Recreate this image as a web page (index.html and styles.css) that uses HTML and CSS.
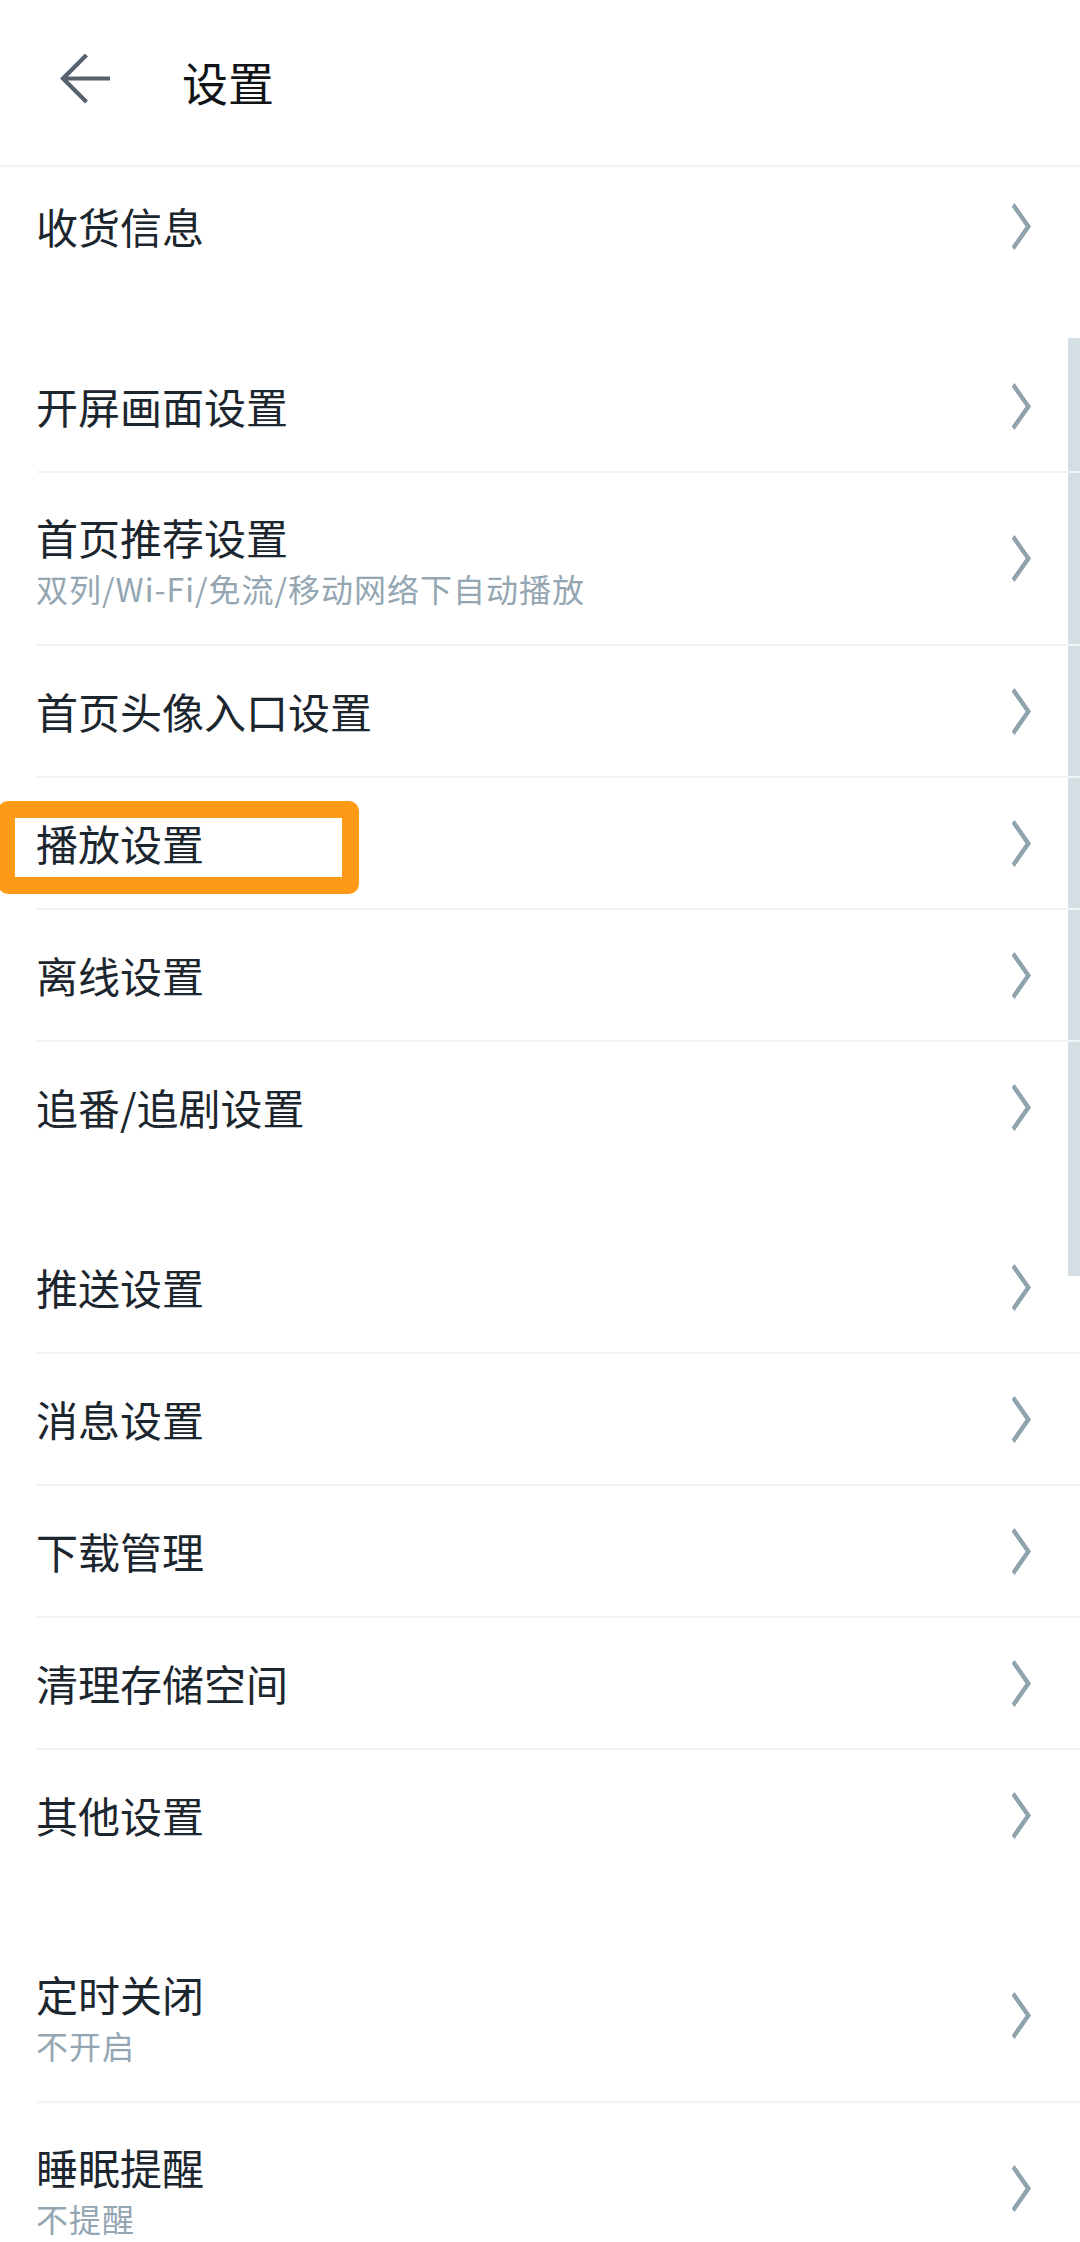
FILE: index.html
```html
<!DOCTYPE html>
<html lang="zh-CN">
<head>
<meta charset="utf-8">
<title>设置</title>
<link rel="stylesheet" href="styles.css">
</head>
<body>
<div class="page">
  <header class="topbar">
    <svg class="back" width="52" height="52" viewBox="0 0 52 52">
      <path d="M50 24.5H6 M27 2.5L5 24.5L27 46.5" fill="none" stroke="#56636e" stroke-width="4.2" stroke-linecap="square" stroke-linejoin="miter"/>
    </svg>
    <h1 class="title">设置</h1>
  </header>

  <section class="group group-first">
    <div class="item item-first"><div class="inner"><div class="text"><div class="label">收货信息</div></div><span class="chev"></span></div></div>
  </section>

  <div class="gap"></div>

  <section class="group">
    <div class="item"><div class="inner"><div class="text"><div class="label">开屏画面设置</div></div><span class="chev"></span></div></div>
    <div class="item two"><div class="inner"><div class="text"><div class="label">首页推荐设置</div><div class="sub">双列/Wi-Fi/免流/移动网络下自动播放</div></div><span class="chev"></span></div></div>
    <div class="item"><div class="inner"><div class="text"><div class="label">首页头像入口设置</div></div><span class="chev"></span></div></div>
    <div class="item"><div class="inner"><div class="text"><div class="label">播放设置</div></div><span class="chev"></span></div></div>
    <div class="item"><div class="inner"><div class="text"><div class="label">离线设置</div></div><span class="chev"></span></div></div>
    <div class="item last"><div class="inner"><div class="text"><div class="label">追番/追剧设置</div></div><span class="chev"></span></div></div>
  </section>

  <div class="gap"></div>

  <section class="group">
    <div class="item"><div class="inner"><div class="text"><div class="label">推送设置</div></div><span class="chev"></span></div></div>
    <div class="item"><div class="inner"><div class="text"><div class="label">消息设置</div></div><span class="chev"></span></div></div>
    <div class="item"><div class="inner"><div class="text"><div class="label">下载管理</div></div><span class="chev"></span></div></div>
    <div class="item"><div class="inner"><div class="text"><div class="label">清理存储空间</div></div><span class="chev"></span></div></div>
    <div class="item last"><div class="inner"><div class="text"><div class="label">其他设置</div></div><span class="chev"></span></div></div>
  </section>

  <div class="gap"></div>

  <section class="group">
    <div class="item two"><div class="inner"><div class="text"><div class="label">定时关闭</div><div class="sub">不开启</div></div><span class="chev"></span></div></div>
    <div class="item two last"><div class="inner"><div class="text"><div class="label">睡眠提醒</div><div class="sub">不提醒</div></div><span class="chev"></span></div></div>
  </section>

  <div class="scrollbar"></div>
  <div class="highlight"></div>
</div>
</body>
</html>
```

FILE: styles.css
```css
html, body {
  margin: 0;
  padding: 0;
  background: #ffffff;
}
body {
  width: 1080px;
  height: 2242px;
  overflow: hidden;
  font-family: "Noto Sans CJK SC", "Noto Sans", sans-serif;
}
.page {
  position: relative;
  width: 1080px;
  height: 2242px;
  overflow: hidden;
  background: #ffffff;
}
.topbar {
  height: 165px;
  display: flex;
  align-items: center;
  border-bottom: 2px solid #f1f5f8;
  box-sizing: content-box;
}
.back {
  margin-left: 58px;
  margin-top: -6px;
  flex: none;
}
.title {
  margin: -4px 0 0 72px;
  font-size: 46px;
  font-weight: 400;
  color: #111417;
  line-height: 60px;
}
.group {
  display: flex;
  flex-direction: column;
}
.item::after {
  content: "";
  display: block;
  height: 2px;
  margin-left: 37px;
  background: #f0f4f7;
  position: relative;
  z-index: 3;
}
.item.last::after,
.item-first::after {
  display: none;
}
.inner {
  height: 130px;
  display: flex;
  align-items: center;
  padding-left: 36px;
  padding-right: 49px;
}
.item-first .inner {
  height: 124px;
  padding-bottom: 6px;
  box-sizing: border-box;
}
.item.two .inner {
  height: 171px;
  padding-top: 2px;
  box-sizing: border-box;
}
.text {
  flex: 1;
  display: flex;
  flex-direction: column;
}
.label {
  font-size: 42px;
  line-height: 50px;
  color: #1c262e;
}
.sub {
  margin-top: 6px;
  font-size: 32px;
  line-height: 40px;
  letter-spacing: 1px;
  color: #94a6b1;
}
.chev {
  flex: none;
  width: 14px;
  height: 14px;
  margin-right: 8px;
  border-right: 3.2px solid #91a4ae;
  border-top: 3.2px solid #91a4ae;
  transform: scaleX(0.7) rotate(45deg) scale(2);
  border-radius: 1px;
}
.item.two .chev {
  margin-bottom: 2px;
}
.gap {
  height: 50px;
  background: #ffffff;
}
.scrollbar {
  position: absolute;
  right: 0;
  top: 338px;
  width: 12px;
  height: 938px;
  background: #d5dfe3;
  z-index: 2;
}
.highlight {
  position: absolute;
  left: -2px;
  top: 801px;
  width: 361px;
  height: 93px;
  box-sizing: border-box;
  border: 17px solid #ff9a17;
  border-radius: 10px;
  z-index: 4;
}
```
